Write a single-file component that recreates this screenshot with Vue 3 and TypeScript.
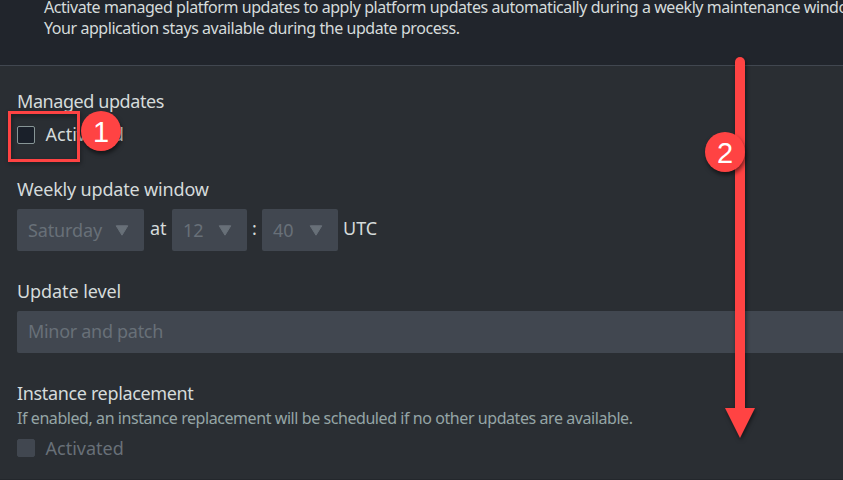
<script setup lang="ts">
interface Picker { value: string; kind: string; after: string }
const pickers: Picker[] = [
  { value: 'Saturday', kind: 'day', after: 'at' },
  { value: '12', kind: 'hour', after: ':' },
  { value: '40', kind: 'minute', after: 'UTC' },
]
</script>

<template>
  <main class="page">
    <header class="intro">
      <p>Activate managed platform updates to apply platform updates automatically during a weekly maintenance window.</p>
      <p>Your application stays available during the update process.</p>
    </header>
    <section class="body">
      <h2 class="managed">Managed updates</h2>
      <label class="check"><span class="box"></span><span class="caption">Activated</span></label>
      <h2 class="weekly">Weekly update window</h2>
      <div class="pickers">
        <template v-for="p in pickers" :key="p.kind">
          <div class="select" :class="p.kind">
            <span>{{ p.value }}</span>
            <svg width="14" height="11" viewBox="0 0 14 11"><path d="M1.2 .8H12.8L7 10.2Z" fill="#687078" stroke="#687078" stroke-linejoin="round" /></svg>
          </div>
          <span class="sep" :class="p.kind + '-sep'">{{ p.after }}</span>
        </template>
      </div>
      <h2 class="level">Update level</h2>
      <div class="wide">Minor and patch</div>
      <h2 class="replace">Instance replacement</h2>
      <p class="hint">If enabled, an instance replacement will be scheduled if no other updates are available.</p>
      <label class="check off"><span class="box"></span><span>Activated</span></label>
    </section>
    <div class="frame"></div>
    <div class="badge one">1</div>
    <svg class="arrow" width="30" height="382" viewBox="0 0 30 382"><path d="M15 5V353" stroke="#ff4343" stroke-width="10" stroke-linecap="round" /><path d="M0 351H30L15 381Z" fill="#ff4343" /></svg>
    <div class="badge two">2</div>
  </main>
</template>

<style>
body { background: #2a2e33; overflow: hidden; }
</style>
<style scoped>
.page { position: relative; display: flex; flex-direction: column; box-sizing: border-box; width: 843px; height: 480px; overflow: hidden; background: #2a2e33; border-bottom: 1px solid #23272c; color: #d5dbdb; font: 18px/22px "Noto Sans", sans-serif; white-space: nowrap; }
p, h2 { margin: 0; font-weight: 400; font-size: inherit; }
.intro { flex: none; box-sizing: border-box; height: 66px; padding-left: 44px; background: #21252c; border-bottom: 1px solid #414750; font-size: 16px; line-height: 21px; letter-spacing: -.44px; }
.intro p:first-child { margin-top: -3px; }
.body { padding: 24px 0 0 17px; }
.managed { letter-spacing: -.42px; }
.check { display: flex; align-items: center; gap: 10.5px; height: 22px; margin-top: 12px; }
.caption { padding-bottom: 2px; }
.box { box-sizing: border-box; width: 18px; height: 18px; border: 1px solid #879596; border-radius: 2px; background: #1a202a; }
.weekly { margin-top: 32px; letter-spacing: -.17px; }
.pickers { display: flex; margin-top: 9px; height: 42px; }
.select { box-sizing: border-box; display: flex; justify-content: space-between; align-items: center; padding: 0 15px 0 11px; height: 42px; background: #414750; border-radius: 2px; color: #687078; letter-spacing: -.12px; }
.day { width: 127px; }
.hour { width: 75px; }
.minute { width: 76px; }
.sep { line-height: 39px; box-sizing: border-box; }
.day-sep { width: 28px; padding-left: 6px; }
.hour-sep { width: 15px; padding-left: 5px; }
.minute-sep { padding-left: 5px; }
.level { margin-top: 29px; letter-spacing: -.08px; }
.wide { box-sizing: border-box; margin-top: 9px; height: 42px; line-height: 40px; padding-left: 11px; background: #414750; border-radius: 2px 0 0 2px; color: #687078; letter-spacing: -.3px; }
.replace { margin-top: 29px; letter-spacing: -.35px; }
.hint { margin-top: 3px; font-size: 16px; letter-spacing: -.43px; color: #95a5a6; }
.off { margin-top: 8px; color: #687078; }
.off .box { background: #414750; border-color: #414750; }
.frame { position: absolute; box-sizing: border-box; left: 8px; top: 111px; width: 72px; height: 51px; border: 3px solid #ff4343; filter: drop-shadow(1px 2px 2px #0006); }
.badge { position: absolute; width: 40px; height: 40px; border-radius: 50%; background: #ff4343; color: #fff; font: 29px/42px "Liberation Sans", Arial, sans-serif; text-align: center; box-shadow: 1px 3px 4px #0008; }
.one { left: 81px; top: 111px; }
.two { left: 705px; top: 132px; }
.arrow { position: absolute; left: 725px; top: 57px; overflow: visible; filter: drop-shadow(1px 2px 2px #0008); }
</style>
